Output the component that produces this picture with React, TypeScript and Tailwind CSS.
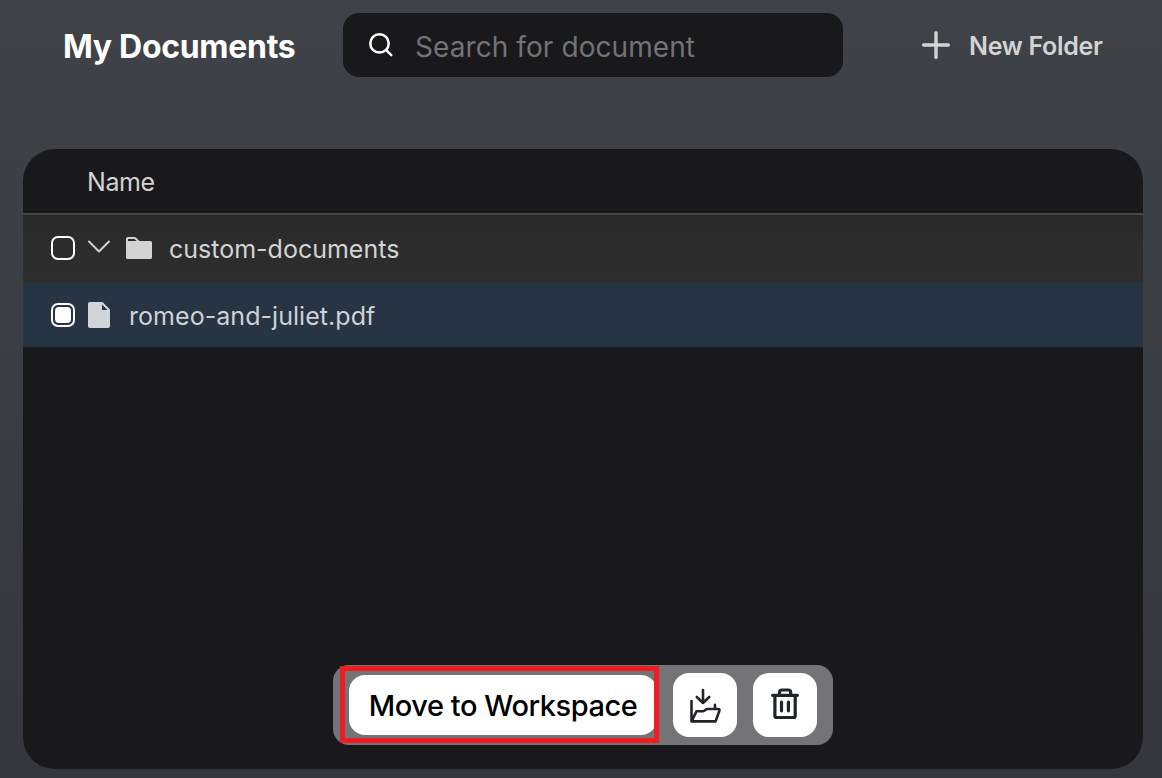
import React from "react";

function SearchIcon() {
  return (
    <svg width="32" height="32" viewBox="0 0 32 32" fill="none" stroke="#fff" strokeWidth="2.5" strokeLinecap="round">
      <circle cx="14.5" cy="14.4" r="9.2" />
      <path d="M21.3 21.2 26.3 26.2" />
    </svg>
  );
}

function PlusIcon() {
  return (
    <svg width="32" height="32" viewBox="0 0 32 32" fill="none" stroke="#d3d3d4" strokeWidth="3.4" strokeLinecap="round">
      <path d="M3.6 16h24.8M16 3.6v24.8" />
    </svg>
  );
}

function ChevronIcon() {
  return (
    <svg width="24" height="24" viewBox="0 0 24 24" fill="none" stroke="#d3d3d3" strokeWidth="2" strokeLinecap="round" strokeLinejoin="round">
      <path d="M2 6.5 12 16.5 22 6.5" />
    </svg>
  );
}

function FolderIcon() {
  return (
    <svg width="28" height="24" viewBox="0 0 28 24" fill="#d3d3d3">
      <path
        fillRule="evenodd"
        d="M3 1h6.4q1 0 1.8.8L14.500 5H25.500Q27 5 27 6.500V21.500Q27 23 25.500 23H2.500Q1 23 1 21.500V3Q1 1 3 1ZM3 3V5H11.500L9.500 3Z"
      />
    </svg>
  );
}

function FileIcon() {
  return (
    <svg width="24" height="28" viewBox="0 0 24 28" fill="#d2d5d8">
      <path
        fillRule="evenodd"
        d="M3 1H15.500L23 8.500V25Q23 27 21 27H3Q1 27 1 25V3Q1 1 3 1ZM15 3.500V9H20.500Z"
      />
    </svg>
  );
}

function FolderDownIcon() {
  return (
    <svg width="64" height="64" viewBox="0 0 64 64" fill="none" stroke="#212529" strokeWidth="2.6" strokeLinecap="round" strokeLinejoin="round">
      <path d="M30 17v13M23.800 24 30 30l6.200-6" />
      <path d="M18.500 28v20.400H42.600L46.400 37.700Q46.900 36 45 36H34.500Q33.300 36 32.300 37L31.300 37.800Q30.800 38.200 30 38.200H23.500L18.700 48.100M42 31.800v3.700" />
    </svg>
  );
}

function TrashIcon() {
  return (
    <svg width="64" height="64" viewBox="0 0 64 64" fill="none" stroke="#212529" strokeWidth="3.2" strokeLinecap="round" strokeLinejoin="round">
      <path d="M19.600 22.300h24.800M21.900 22.300v20.700q0 1.500 1.500 1.500h17.300q1.500 0 1.500-1.500v-20.700M26.500 22v-2.500q0-2.500 2.500-2.500h6.200q2.500 0 2.500 2.500V22" />
      <path d="M28.500 29.100v8.700M35.400 29.100v8.700" />
    </svg>
  );
}

function Checkbox({ checked = false }: { checked?: boolean }) {
  return (
    <button
      role="checkbox"
      aria-checked={checked}
      className="flex size-6 shrink-0 items-center justify-center rounded-[7px] border-2 border-white"
    >
      {checked && <span className="size-4 rounded-[4px] bg-white" />}
    </button>
  );
}

export default function App() {
  return (
    <div className="flex h-[778px] w-[1162px] flex-col overflow-hidden bg-[linear-gradient(180deg,#3f4246_0%,#3b3e43_40%,#34363b_100%)] px-[23px] pt-[13px] font-['Inter','Noto_Sans',sans-serif]">
      <header className="flex h-16 shrink-0 items-center">
        <h1 className="ml-10 w-[280px] whitespace-nowrap pt-[3px] text-[32px] leading-10 font-bold tracking-[-0.3px] text-white">
          My Documents
        </h1>
        <label className="flex h-16 w-[500px] items-center rounded-2xl bg-[#19191b] pl-[22px]">
          <SearchIcon />
          <input
            placeholder="Search for document"
            className="ml-[18px] w-[400px] bg-transparent pt-[3px] text-[28px] leading-9 tracking-[0.08px] text-white outline-none placeholder:text-[#737375]"
          />
        </label>
        <button className="ml-[77px] flex items-center gap-[17px] whitespace-nowrap text-[25px] leading-8 font-semibold tracking-[-0.3px] text-[#d3d3d4]">
          <PlusIcon />
          <span className="pt-[2px]">New Folder</span>
        </button>
      </header>
      <main className="mt-[72px] flex h-[620px] w-[1120px] shrink-0 flex-col overflow-hidden rounded-[32px] bg-[#19191b] text-[25px] leading-8 text-[#d3d3d3]">
        <div className="flex h-[66px] shrink-0 items-center border-b-2 border-[#454547] pl-16">
          <span className="pt-[1px] tracking-[-0.4px]">Name</span>
        </div>
        <div className="flex h-[68px] shrink-0 items-center bg-[linear-gradient(180deg,#282828_0%,#2c2c2c_40%,#2d2d2d_100%)] pb-[2px] pl-7">
          <Checkbox />
          <span className="ml-3 -mt-[2px]"><ChevronIcon /></span>
          <span className="ml-[14px]"><FolderIcon /></span>
          <span className="ml-4 pt-[2px] tracking-[0px]">custom-documents</span>
        </div>
        <div className="flex h-16 shrink-0 items-center bg-[#273444] pl-7 text-[#ced1d4]">
          <Checkbox checked />
          <span className="ml-3"><FileIcon /></span>
          <span className="ml-[18px] pt-[1px] tracking-[0.05px]">romeo-and-juliet.pdf</span>
        </div>
        <div className="flex flex-1 items-end justify-center pb-6">
          <div className="relative flex h-20 w-[500px] items-center gap-4 rounded-2xl bg-[#747476] pl-4">
            <button className="h-[60px] w-[308px] rounded-2xl bg-white pt-[2px] text-center text-[29px] font-medium whitespace-nowrap tracking-[-0.45px] text-black">
              Move to Workspace
            </button>
            <button className="size-16 rounded-2xl bg-white" aria-label="Move to folder"><FolderDownIcon /></button>
            <button className="size-16 rounded-2xl bg-white" aria-label="Delete"><TrashIcon /></button>
            <div className="pointer-events-none absolute top-[1px] left-[7px] h-[77px] w-[319px] border-[5px] border-[#ef1c24]" />
          </div>
        </div>
      </main>
    </div>
  );
}
